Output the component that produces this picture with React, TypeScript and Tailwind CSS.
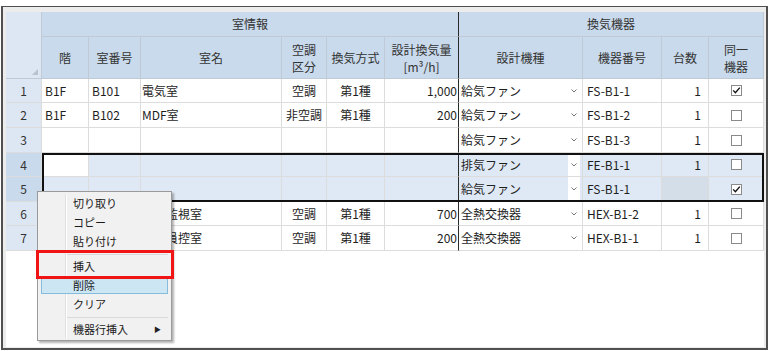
import React from 'react';

type Row = {
  no: number;
  floor: string;
  room: string;
  name: string;
  ac: string;
  vent: string;
  vol: string;
  model: string;
  code: string;
  qty: string;
  same: boolean;
};

const ROWS: Row[] = [
  { no: 1, floor: 'B1F', room: 'B101', name: '電気室', ac: '空調', vent: '第1種', vol: '1,000', model: '給気ファン', code: 'FS-B1-1', qty: '1', same: true },
  { no: 2, floor: 'B1F', room: 'B102', name: 'MDF室', ac: '非空調', vent: '第1種', vol: '200', model: '給気ファン', code: 'FS-B1-2', qty: '1', same: false },
  { no: 3, floor: '', room: '', name: '', ac: '', vent: '', vol: '', model: '給気ファン', code: 'FS-B1-3', qty: '1', same: false },
  { no: 4, floor: '', room: '', name: '', ac: '', vent: '', vol: '', model: '排気ファン', code: 'FE-B1-1', qty: '1', same: false },
  { no: 5, floor: '', room: '', name: '', ac: '', vent: '', vol: '', model: '給気ファン', code: 'FS-B1-1', qty: '', same: true },
  // 階・室番号 are hidden under the context menu
  { no: 6, floor: '', room: '', name: '中央監視室', ac: '空調', vent: '第1種', vol: '700', model: '全熱交換器', code: 'HEX-B1-2', qty: '1', same: false },
  { no: 7, floor: '', room: '', name: '警備員控室', ac: '空調', vent: '第1種', vol: '200', model: '全熱交換器', code: 'HEX-B1-1', qty: '1', same: false },
];

const ROW_HEIGHTS = ['h-[24px]', 'h-[25px]', 'h-[25px]', 'h-[24px]', 'h-[25px]', 'h-[24px]', 'h-[25px]'];

const cell = 'flex items-center overflow-hidden whitespace-nowrap border-b border-r border-[#dcdcdc]';
const head = 'flex items-center justify-center text-center border-b border-r border-[#bfcad6] bg-[#c9daec] text-[#333]';

function Chevron() {
  return (
    <svg width="6" height="4" viewBox="0 0 6 4" className="block">
      <polyline points="0.5,0.5 3,3 5.5,0.5" fill="none" stroke="#777" strokeWidth="1" />
    </svg>
  );
}

function Checkbox({ checked }: { checked: boolean }) {
  return (
    <svg width="11" height="11" viewBox="0 0 11 11" className="block">
      <rect x="0.5" y="0.5" width="10" height="10" fill="#fff" stroke="#8a8a8a" />
      {checked && <polyline points="2.2,5.4 4.4,7.8 8.8,2.6" fill="none" stroke="#111" strokeWidth="1.4" />}
    </svg>
  );
}

function MenuItem({ label, active, arrow }: { label: string; active?: boolean; arrow?: boolean }) {
  return (
    <div className="h-[19px] px-[3px] py-[1px]">
      <div
        className={
          'relative flex h-full items-center pl-[31px] ' +
          (active ? 'border border-[#86bbdc] bg-[#cde6f4]' : 'border border-transparent')
        }
      >
        {label}
        {arrow && <span className="absolute right-[6px] text-[7px] text-[#222]">▶</span>}
      </div>
    </div>
  );
}

function MenuSeparator() {
  return (
    <div className="flex h-[6px] items-center pl-[29px] pr-[3px]">
      <div className="h-px w-full bg-[#dadada]" />
    </div>
  );
}

export default function App() {
  return (
    <div className="relative h-[351px] w-[772px] overflow-hidden bg-white font-['Noto_Sans_CJK_JP',sans-serif] text-[12px] text-[#1e1e1e]">
      <div className="ml-px mt-[6px] h-[344px] w-[767px] border-x-2 border-b-2 border-t border-[#505050] bg-[#ececec] pb-px pl-[3px] pr-[2px] pt-[5px]">
        <div className="relative h-full bg-white">
          <div className="grid grid-cols-[36px_47px_52px_141px_45px_58px_74px_124px_79px_47px_55px] grid-rows-[25px_42px]">
            <div className="relative row-span-2 border-b border-r border-[#bfcad6] bg-[#dde7f3]">
              <svg width="6" height="6" viewBox="0 0 6 6" className="absolute bottom-[3px] right-[3px]">
                <polygon points="6,0 6,6 0,6" fill="#b8c2cc" />
              </svg>
            </div>
            <div className={head + ' col-span-6 border-r-[#2a2a2a]'}>室情報</div>
            <div className={head + ' col-span-4'}>換気機器</div>
            <div className={head}>階</div>
            <div className={head}>室番号</div>
            <div className={head}>室名</div>
            <div className={head + ' leading-[17px]'}>
              空調
              <br />
              区分
            </div>
            <div className={head}>換気方式</div>
            <div className={head + ' leading-[17px] border-r-[#2a2a2a]'}>
              設計換気量
              <br />
              [m³/h]
            </div>
            <div className={head}>設計機種</div>
            <div className={head}>機器番号</div>
            <div className={head}>台数</div>
            <div className={head + ' leading-[17px]'}>
              同一
              <br />
              機器
            </div>
          </div>

          {ROWS.map((r, i) => {
            const sel = r.no === 4 || r.no === 5;
            const bg = sel ? 'bg-[#dfe9f5]' : 'bg-white';
            return (
              <div
                key={r.no}
                className={
                  'grid grid-cols-[36px_47px_52px_141px_45px_58px_74px_124px_79px_47px_55px] ' + ROW_HEIGHTS[i]
                }
              >
                <div
                  className={
                    cell +
                    ' justify-center border-[#c7d1dc] text-[#333] ' +
                    (sel ? 'bg-[#c9daec]' : 'bg-[#dde7f3]')
                  }
                >
                  {r.no}
                </div>
                <div className={cell + ' pl-[3px] ' + (r.no === 4 ? 'bg-white' : bg)}>{r.floor}</div>
                <div className={cell + ' pl-[3px] ' + bg}>{r.room}</div>
                <div className={cell + ' pl-[1px] ' + bg}>{r.name}</div>
                <div className={cell + ' justify-center ' + bg}>{r.ac}</div>
                <div className={cell + ' justify-center ' + bg}>{r.vent}</div>
                <div className={cell + ' justify-end pr-[1px] border-r-[#2a2a2a] ' + bg}>{r.vol}</div>
                <div className={cell + ' pl-[2px] ' + bg}>
                  <span className="flex-1">{r.model}</span>
                  <span
                    className={
                      'mr-[2px] flex h-full w-[12px] items-center justify-center ' + (sel ? 'bg-white' : '')
                    }
                  >
                    <Chevron />
                  </span>
                </div>
                <div className={cell + ' pl-[4px] ' + bg}>{r.code}</div>
                <div className={cell + ' justify-end pr-[7px] ' + (r.no === 5 ? 'bg-[#d4dee9]' : bg)}>{r.qty}</div>
                <div className={cell + ' justify-center ' + bg}>
                  <Checkbox checked={r.same} />
                </div>
              </div>
            );
          })}

          {/* selected range */}
          <div className="pointer-events-none absolute left-[36px] right-0 top-[141px] h-[49px] border-2 border-[#111]" />
        </div>
      </div>

      {/* context menu */}
      <div className="absolute left-[37px] top-[191px] w-[135px] border border-[#9a9a9a] bg-[#f1f1f1] pb-px pt-[2px] text-[11px] text-[#1a1a1a] shadow-[2px_2px_2px_rgba(0,0,0,0.3)]">
        <div className="absolute bottom-[2px] left-[27px] top-[2px] w-px bg-[#e0e0e0]" />
        <div className="absolute bottom-[2px] left-[28px] top-[2px] w-px bg-white" />
        <MenuItem label="切り取り" />
        <MenuItem label="コピー" />
        <MenuItem label="貼り付け" />
        <MenuSeparator />
        <MenuItem label="挿入" />
        <MenuItem label="削除" active />
        <MenuItem label="クリア" />
        <MenuSeparator />
        <MenuItem label="機器行挿入" arrow />
      </div>

      {/* highlight annotation */}
      <div className="absolute left-[36px] top-[250px] h-[29px] w-[138px] border-[3px] border-[#f01414]" />
    </div>
  );
}
